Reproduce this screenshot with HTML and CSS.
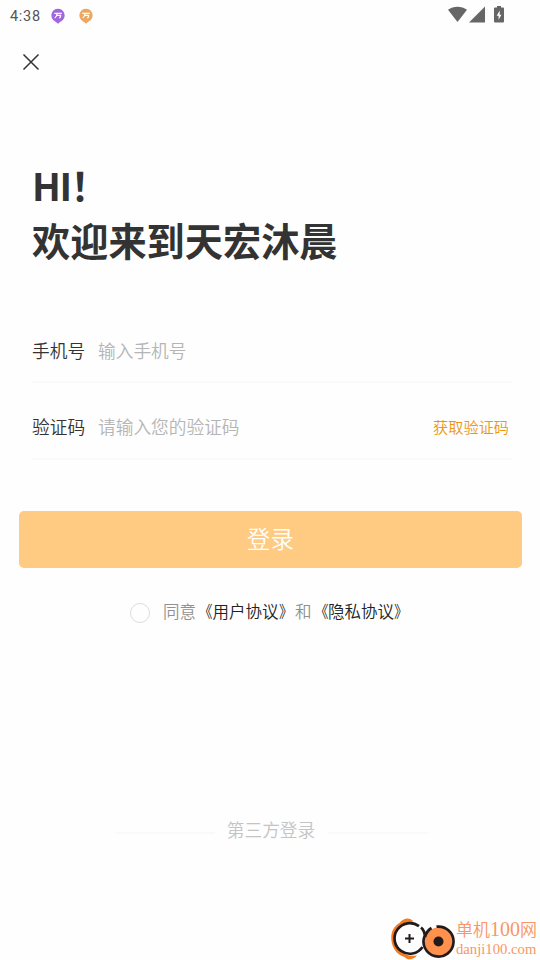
FILE: index.html
```html
<!DOCTYPE html>
<html lang="zh-CN">
<head>
<meta charset="utf-8">
<title>登录</title>
<link rel="stylesheet" href="styles.css">
</head>
<body>
<main class="screen">
  <header class="status">
    <span class="time">4:38</span>
    <svg class="pin pin-purple" viewBox="0 0 14 17"><path class="pin-body" d="M7 .8a6.600 6.600 0 0 1 4.800 11.100C10.300 13.300 8.400 14 7 15.800 5.600 14 3.700 13.300 2.200 11.900A6.600 6.600 0 0 1 7 .8z"/><path class="pin-mark" d="M3.300 5.300h7.500M6.100 5.300c0 2.300-.7 3.700-2.400 4.700M6 7.300h3.600c0 1.700-.2 2.500-1.400 2.500"/></svg>
    <svg class="pin pin-orange" viewBox="0 0 14 17"><path class="pin-body" d="M7 .8a6.600 6.600 0 0 1 4.800 11.100C10.300 13.300 8.400 14 7 15.800 5.600 14 3.700 13.300 2.200 11.900A6.600 6.600 0 0 1 7 .8z"/><path class="pin-mark" d="M3.300 5.300h7.500M6.100 5.300c0 2.300-.7 3.700-2.400 4.700M6 7.300h3.600c0 1.700-.2 2.500-1.400 2.500"/></svg>
    <svg class="system" viewBox="0 0 58 18"><path d="M0 3.800C5.500-.4 13.500-.4 19 3.800L9.500 16z"/><path d="M37 .5V16.500H21z"/><path d="M47 1.500h2V0h4v1.500h2q1 0 1 1v13q0 1-1 1h-8q-1 0-1-1v-13q0-1 1-1z"/><path class="bolt" d="M51.700 4.500l-3 5.200h1.900v4l2.800-5h-1.700z"/></svg>
  </header>
  <button class="close" aria-label="关闭"><svg viewBox="0 0 18 18"><path d="M1.500 1.500l15 15M16.500 1.500l-15 15"/></svg></button>
  <h1 class="title"><span class="greeting">HI！</span><br>欢迎来到天宏沐晨</h1>
  <form class="form">
    <div class="field"><span class="label">手机号</span><span class="hint">输入手机号</span></div>
    <div class="field"><span class="label">验证码</span><span class="hint">请输入您的验证码</span><span class="get-code">获取验证码</span></div>
  </form>
  <button class="login">登录</button>
  <div class="agree"><i class="radio"></i><p>同意<b><span class="open">《</span>用户协议<span class="end">》</span></b>和<b><span class="open">《</span>隐私协议<span class="end">》</span></b></p></div>
  <div class="third"><span>第三方登录</span></div>
  <aside class="brand">
    <svg viewBox="0 0 66 44">
      <path class="swoosh" d="M24.500 5.500C21 1 14.500 1.500 10.500 7 3.500 11 1.500 18 2.500 25c1 8 6 14 13 16 3 3.500 9 3 12.500-1.500-12 2-21.500-5.500-22-16.500C5.600 14 11 7.500 18 6.500z"/>
      <path class="ring" d="M30 10.200A15.300 15.300 0 1 0 33.500 31"/>
      <path class="plus" d="M20.500 18v9M16 22.500h9"/>
      <circle class="disc" cx="49.500" cy="25.500" r="14"/>
      <path class="ring" d="M32 11.500q3.500 3 3.800 8.500M42.500 12q-5 3-6.500 9M47.500 10.700A15 15 0 1 1 35.800 19.500"/>
      <circle class="hub" cx="49.500" cy="25.500" r="5"/>
    </svg>
    <div class="brand-text"><span class="brand-name">单机<span class="brand-number">100</span>网</span><span class="brand-url">danji100.com</span></div>
  </aside>
</main>
</body>
</html>
```
FILE: styles.css
```css
* { box-sizing: border-box; }
body { margin: 0; background: #fff; font-family: "Noto Sans CJK SC DemiLight", "Noto Sans CJK SC", sans-serif; font-weight: 350; color: #333; }
button { border: 0; background: none; padding: 0; font: inherit; }
svg { display: block; fill: none; }
.screen { position: relative; display: flex; flex-direction: column; width: 540px; height: 960px; overflow: hidden; background: #fefefe; }
.status { display: flex; align-items: center; height: 32px; padding-left: 10px; }
.time { width: 41px; padding-top: 1px; font: 400 14.5px/32px Roboto, sans-serif; letter-spacing: .7px; color: #555; }
.pin { width: 14px; height: 17px; margin-right: 14px; }
.pin-purple .pin-body { fill: #a066dc; }
.pin-orange .pin-body { fill: #eaa863; }
.pin-mark { stroke: #fff; stroke-width: 1.3; }
.system { width: 58px; height: 18px; margin: -2px 34px 0 auto; fill: #666; }
.bolt { fill: #fff; }
.close { width: 18px; height: 18px; margin: 21px 0 0 21.500px; }
.close path { stroke: #333; stroke-width: 1.5; }
.title { height: 112px; margin: 86px 0 0 32px; font-family: "Noto Sans CJK SC", sans-serif; font-size: 38.2px; line-height: 55px; font-weight: 700; }
.greeting { letter-spacing: -1.5px; }
.form { margin: 51px 28px 0 32px; }
.field { display: flex; align-items: center; height: 77px; border-bottom: 2px solid #fafafa; font-size: 17.700px; }
.field:first-child { height: 63px; padding-bottom: 2px; }
.field + .field { padding-top: 10px; }
.label { width: 66px; }
.hint { color: #b5b5b5; }
.field + .field .hint { padding-top: 1px; }
.get-code { margin: 0 3px 0 auto; font-size: 15.2px; color: #ed970f; }
.login { width: 503px; height: 57px; margin: 51px 0 0 19px; padding-bottom: 3px; border-radius: 5px; background: #ffca82; color: #fff; font-size: 23.4px; line-height: 54px; }
.agree { display: flex; align-items: center; height: 24px; margin: 33px 0 0 130px; }
.radio { width: 20px; height: 20px; margin-right: 13px; border: 1px solid #ddd; border-radius: 50%; }
.agree p { margin: -5px 0 0; font-size: 16.5px; line-height: 24px; color: #909090; }
.agree b { font-weight: inherit; color: #222; }
.open, .end { display: inline-block; }
.open { transform: scaleX(.85); transform-origin: right; }
.end { transform: scaleX(.85); transform-origin: left; }
.third { display: flex; align-items: center; gap: 13px; width: 312px; height: 26px; margin: 195px 0 0 115.500px; font-size: 17.700px; color: #c4c4c4; }
.third span { margin: -9px 0 0 -1px; }
.third::before, .third::after { content: ""; flex: 1; height: 2px; background: #f9f9f9; }
.brand { position: absolute; left: 389px; top: 916px; display: flex; color: #f99668; }
.brand > svg { width: 66px; height: 44px; }
.swoosh { fill: #f47b20; }
.ring { stroke: #231a1c; stroke-width: 2.700; }
.plus { stroke: #231a1c; stroke-width: 2; }
.disc { fill: #ff914d; }
.hub { fill: #231a1c; }
.brand-text { display: flex; flex-direction: column; padding-left: 1px; font-family: "Liberation Serif", "Noto Sans CJK SC", serif; font-weight: 350; white-space: nowrap; }
.brand-name { font-size: 17px; line-height: 27px; }
.brand-number { font-size: 20px; }
.brand-url { margin-top: -2px; font-size: 14.700px; line-height: 14px; }
```
